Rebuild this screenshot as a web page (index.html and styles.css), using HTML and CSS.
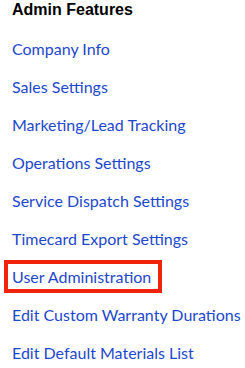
FILE: index.html
```html
<!DOCTYPE html>
<html lang="en">
<head>
    <meta charset="UTF-8">
    <meta name="viewport" content="width=device-width, initial-scale=1.0">
    <title>Admin Features</title>
    <link rel="stylesheet" href="styles.css">
</head>
<body>
  <h2 class="menu-title">Admin Features</h2>

  <ul class="menu">
    <li><a href="#">Company Info</a></li>
    <li><a href="#">Sales Settings</a></li>
    <li><a href="#">Marketing/Lead Tracking</a></li>
    <li><a href="#">Operations Settings</a></li>
    <li><a href="#">Service Dispatch Settings</a></li>
    <li><a href="#">Timecard Export Settings</a></li>
    <li><a href="#" class="active">User Administration</a></li>
    <li><a href="#">Edit Custom Warranty Durations</a></li>
    <li><a href="#">Edit Default Materials List</a></li>
  </ul>
</body>
</html>
```

FILE: styles.css
```css
body{
    margin: 0;
    background-color: #fff;
    overflow: hidden;
}

.menu-title{
    font-family: "Liberation Sans", Arial, sans-serif;
    font-size: 16px;
    line-height: 18px;
    font-weight: bold;
    color: #000;
    margin: 1px 0 10px 12px;
}

.menu{
    list-style: none;
    margin: 0;
    padding: 0;
}

.menu li{
    height: 38px;
    display: flex;
    align-items: center;
}

.menu a{
    display: inline-block;
    margin-left: 4px;
    padding: 0 7px 0 4px;
    border: 4px solid transparent;
    line-height: 25px;
    font-family: Lato, "Open Sans", sans-serif;
    font-size: 16px;
    color: #1e48cc;
    text-decoration: none;
    white-space: nowrap;
}

.menu a.active{
    border-color: #f2230c;
}
```
